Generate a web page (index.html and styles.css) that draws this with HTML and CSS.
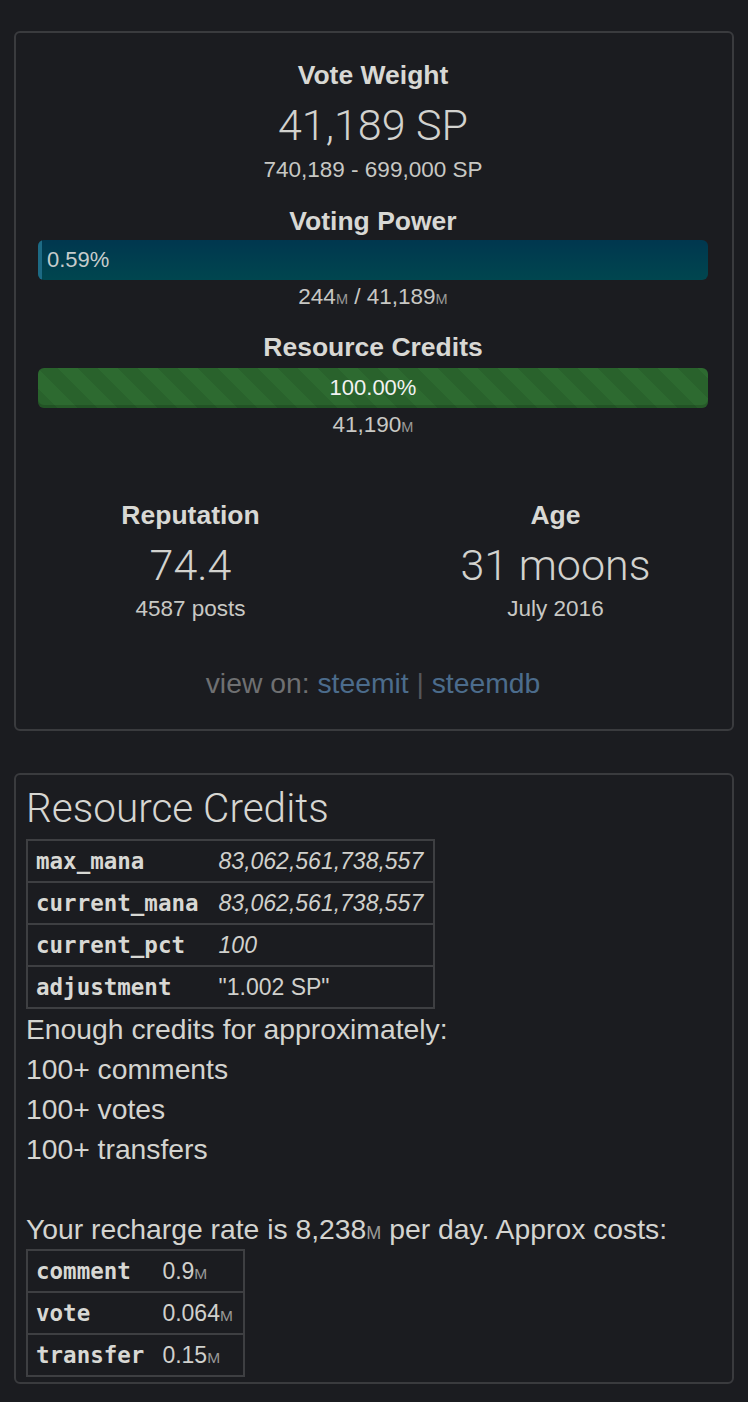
FILE: index.html
```html
<!DOCTYPE html>
<html>
<head>
<meta charset="utf-8">
<link rel="stylesheet" href="styles.css">
</head>
<body>
<div class="page">
  <section class="card summary">
    <h2 class="title t-vote">Vote Weight</h2>
    <div class="big v-vote">41,189 SP</div>
    <div class="sub s-vote">740,189 - 699,000 SP</div>

    <h2 class="title t-vp">Voting Power</h2>
    <div class="bar bar-vp"><div class="bar-fill" style="width:0.59%"></div><span class="bar-label-left">0.59%</span></div>
    <div class="sub s-bar">244<small>M</small> / 41,189<small>M</small></div>

    <h2 class="title t-rc">Resource Credits</h2>
    <div class="bar bar-rc"><span class="bar-label-center">100.00%</span></div>
    <div class="sub s-bar">41,190<small>M</small></div>

    <div class="stats">
      <div class="stat">
        <h2 class="title t-stat">Reputation</h2>
        <div class="big v-stat">74.4</div>
        <div class="sub s-stat">4587 posts</div>
      </div>
      <div class="stat">
        <h2 class="title t-stat">Age</h2>
        <div class="big v-stat">31 moons</div>
        <div class="sub s-stat">July 2016</div>
      </div>
    </div>

    <div class="viewon">view on: <a href="#">steemit</a> <span class="sep">|</span> <a href="#">steemdb</a></div>
  </section>

  <section class="card rc">
    <h3 class="rc-title">Resource Credits</h3>
    <table class="kv kv-main">
      <tr><th>max_mana</th><td><em>83,062,561,738,557</em></td></tr>
      <tr><th>current_mana</th><td><em>83,062,561,738,557</em></td></tr>
      <tr><th>current_pct</th><td><em>100</em></td></tr>
      <tr><th>adjustment</th><td>"1.002 SP"</td></tr>
    </table>
    <div class="line">Enough credits for approximately:</div>
    <div class="line">100+ comments</div>
    <div class="line">100+ votes</div>
    <div class="line">100+ transfers</div>
    <div class="line blank"></div>
    <div class="line">Your recharge rate is 8,238<small>M</small> per day. Approx costs:</div>
    <table class="kv kv-costs">
      <tr><th>comment</th><td>0.9<small>M</small></td></tr>
      <tr><th>vote</th><td>0.064<small>M</small></td></tr>
      <tr><th>transfer</th><td>0.15<small>M</small></td></tr>
    </table>
  </section>
</div>
</body>
</html>
```
FILE: styles.css
```css
html, body {
  margin: 0;
  padding: 0;
  background: #1b1c20;
}

body {
  font-family: "Liberation Sans", Arial, sans-serif;
  color: #d4d4d0;
  font-size: 28px;
  line-height: 40px;
}

.page {
  padding: 31px 14px 19px 14px;
  display: flex;
  flex-direction: column;
  gap: 42px;
}

.card {
  border: 2px solid #3a3b3e;
  border-radius: 6px;
  background: #1b1c20;
}

/* ---------- summary card ---------- */
.summary {
  height: 700px;
  box-sizing: border-box;
  padding: 22px 24px 0 22px;
  text-align: center;
}

.title {
  margin: 0;
  font-size: 26.5px;
  font-weight: 700;
  color: #d8d8d4;
}

.big {
  font-family: Roboto, "Liberation Sans", sans-serif;
  font-weight: 300;
  font-size: 43px;
  color: #d2d2ce;
}

.sub {
  font-size: 22.5px;
  color: #c8c8c4;
}

.sub small {
  font-size: 14.5px;
  color: #9a9a98;
}

.t-vote { line-height: 40px; }
.v-vote { line-height: 50px; margin-top: 5px; }
.s-vote { line-height: 30px; margin-top: 5px; }

.t-vp { line-height: 38px; margin-top: 17px; }
.s-bar { line-height: 34px; }
.t-rc { line-height: 42px; margin-top: 10px; }

.bar {
  position: relative;
  height: 40px;
  border-radius: 6px;
  overflow: hidden;
}

.bar-vp {
  background: linear-gradient(#00374f, #00464f);
  text-align: left;
}

.bar-fill {
  position: absolute;
  left: 0;
  top: 0;
  bottom: 0;
  background: #1d6a84;
}

.bar-label-left {
  position: relative;
  display: block;
  padding-left: 9px;
  line-height: 40px;
  font-size: 22px;
  color: #c6cccc;
}

.bar-rc {
  background-color: #2d6a30;
  background-image: linear-gradient(45deg,
    rgba(0,0,0,0.08) 25%, transparent 25%, transparent 50%,
    rgba(0,0,0,0.08) 50%, rgba(0,0,0,0.08) 75%, transparent 75%, transparent);
  background-size: 40px 40px;
  box-shadow: inset 0 -3px 0 rgba(0,0,0,0.15);
}

.bar-label-center {
  display: block;
  line-height: 40px;
  font-size: 22px;
  color: #f2f2f2;
}

.stats {
  display: grid;
  grid-template-columns: 1fr 1fr;
  margin: 51px -30px 0 -30px;
}

.t-stat { line-height: 40px; }
.v-stat { line-height: 50px; margin-top: 5px; }
.s-stat { line-height: 30px; margin-top: 4px; }

.viewon {
  margin-top: 39px;
  line-height: 40px;
  font-size: 28.3px;
  color: #6f7072;
}

.viewon a {
  color: #4c6c8c;
  text-decoration: none;
}

.viewon .sep {
  color: #55565a;
}

/* ---------- RC card ---------- */
.rc {
  padding: 0 10px 5px 10px;
}

.rc-title {
  margin: 0;
  font-family: Roboto, "Liberation Sans", sans-serif;
  font-weight: 300;
  font-size: 40.5px;
  line-height: 66px;
  height: 64px;
  color: #d6d6d2;
}

.kv {
  border-collapse: collapse;
  border: 2px solid #3e3f42;
}

.kv tr {
  border-top: 2px solid #3e3f42;
}

.kv th, .kv td {
  border: none;
  padding: 0 8px;
  line-height: 40px;
  height: 40px;
  text-align: left;
  white-space: nowrap;
  vertical-align: middle;
}

.kv td {
  padding: 0 10px 0 12px;
  font-size: 23px;
  color: #d0d0cc;
}

.kv th {
  font-family: "DejaVu Sans Mono", "Liberation Mono", monospace;
  font-weight: 700;
  font-size: 22.5px;
  color: #d8d8d4;
}

.kv-costs td {
  padding-left: 10px;
}

.kv td em {
  font-style: italic;
}

.kv td small {
  font-size: 15.5px;
  line-height: 1;
  color: #9a9a98;
}

.line {
  height: 40px;
  line-height: 40px;
  font-size: 28.3px;
  color: #d4d4d0;
}

.line small {
  font-size: 18px;
  line-height: 1;
  color: #9a9a98;
}
```
